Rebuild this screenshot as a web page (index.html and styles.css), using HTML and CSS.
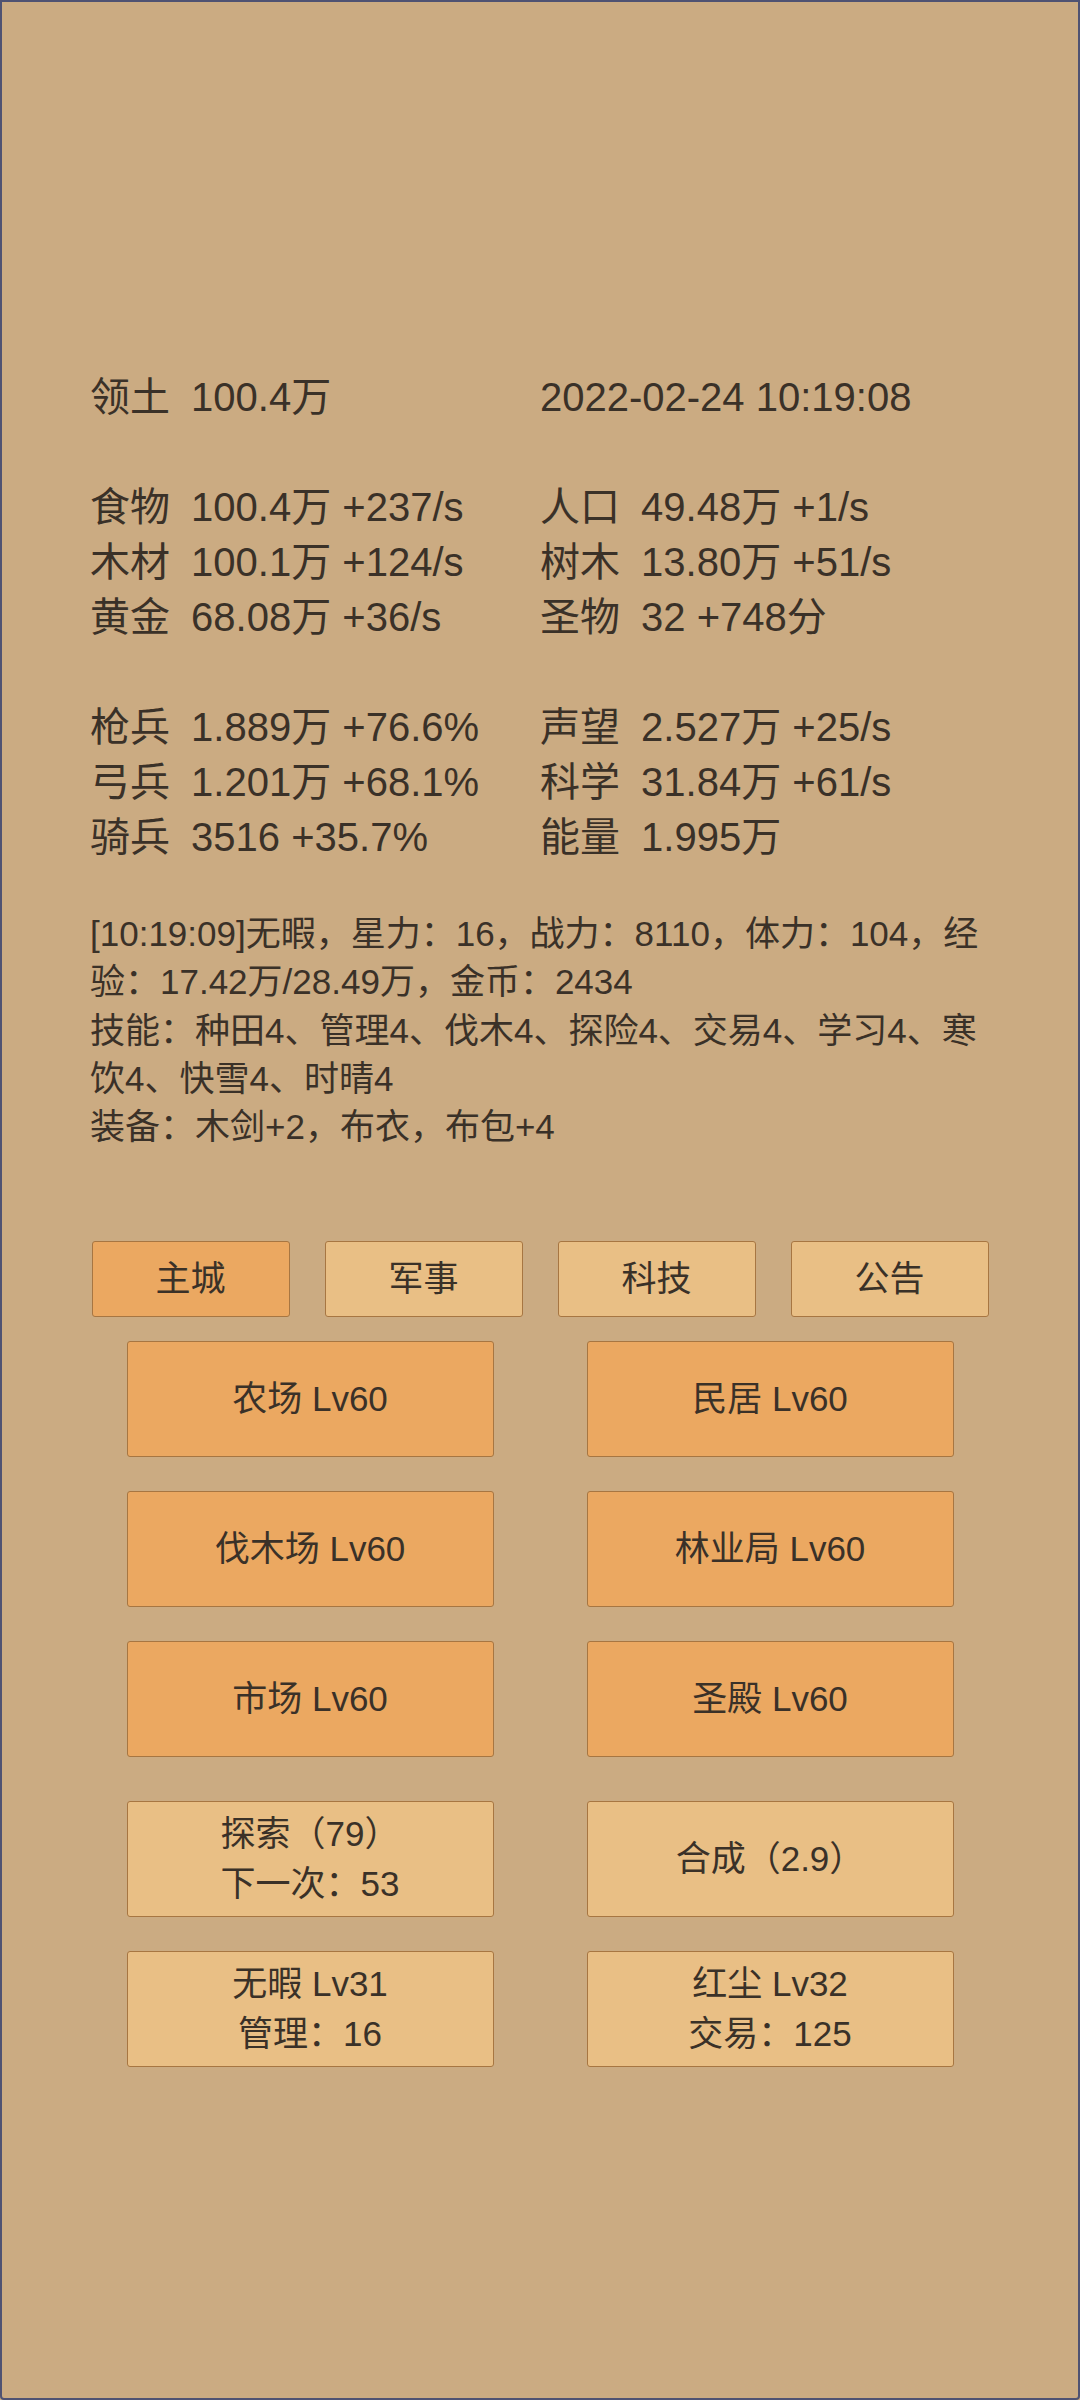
FILE: index.html
```html
<!DOCTYPE html>
<html lang="zh">
<head>
<meta charset="utf-8">
<link rel="stylesheet" href="styles.css">
</head>
<body>
<div class="page">
  <div class="content">
    <div class="stats">
      <div class="stat"><span class="lbl">领土</span> 100.4万</div>
      <div class="stat">2022-02-24 10:19:08</div>
    </div>
    <div class="stats group">
      <div class="stat"><span class="lbl">食物</span> 100.4万 +237/s</div>
      <div class="stat"><span class="lbl">人口</span> 49.48万 +1/s</div>
      <div class="stat"><span class="lbl">木材</span> 100.1万 +124/s</div>
      <div class="stat"><span class="lbl">树木</span> 13.80万 +51/s</div>
      <div class="stat"><span class="lbl">黄金</span> 68.08万 +36/s</div>
      <div class="stat"><span class="lbl">圣物</span> 32 +748分</div>
    </div>
    <div class="stats group">
      <div class="stat"><span class="lbl">枪兵</span> 1.889万 +76.6%</div>
      <div class="stat"><span class="lbl">声望</span> 2.527万 +25/s</div>
      <div class="stat"><span class="lbl">弓兵</span> 1.201万 +68.1%</div>
      <div class="stat"><span class="lbl">科学</span> 31.84万 +61/s</div>
      <div class="stat"><span class="lbl">骑兵</span> 3516 +35.7%</div>
      <div class="stat"><span class="lbl">能量</span> 1.995万</div>
    </div>
    <div class="log">
      <p>[10:19:09]无暇，星力：16，战力：8110，体力：104，经验：17.42万/28.49万，金币：2434</p>
      <p>技能：种田4、管理4、伐木4、探险4、交易4、学习4、寒饮4、快雪4、时晴4</p>
      <p>装备：木剑+2，布衣，布包+4</p>
    </div>
    <div class="tabs">
      <div class="btn tab active">主城</div>
      <div class="btn tab">军事</div>
      <div class="btn tab">科技</div>
      <div class="btn tab">公告</div>
    </div>
    <div class="grid buildings">
      <div class="btn big active">农场 Lv60</div>
      <div class="btn big active">民居 Lv60</div>
      <div class="btn big active">伐木场 Lv60</div>
      <div class="btn big active">林业局 Lv60</div>
      <div class="btn big active">市场 Lv60</div>
      <div class="btn big active">圣殿 Lv60</div>
    </div>
    <div class="grid actions">
      <div class="btn big"><span>探索（79）</span><span>下一次：53</span></div>
      <div class="btn big"><span>合成（2.9）</span></div>
      <div class="btn big"><span>无暇 Lv31</span><span>管理：16</span></div>
      <div class="btn big"><span>红尘 Lv32</span><span>交易：125</span></div>
    </div>
  </div>
</div>
</body>
</html>
```

FILE: styles.css
```css
* { box-sizing: border-box; }
html, body {
  margin: 0;
  padding: 0;
  background: #cbab82;
}
body {
  font-family: "Liberation Sans", "Noto Sans CJK SC", sans-serif;
  color: #3a3128;
}
.page {
  width: 1080px;
  height: 2400px;
  border: 2px solid #4f5272;
  border-radius: 0 0 4px 4px;
  background: #cbab82;
  overflow: hidden;
}
.content {
  padding: 368px 88px 0 88px;
}
.stats {
  display: grid;
  grid-template-columns: 450px 450px;
  font-size: 40px;
  line-height: 55px;
}
.stats.group {
  margin-top: 55px;
}
.stat {
  white-space: nowrap;
}
.lbl {
  margin-right: 10px;
}
.log {
  margin-top: 45px;
  font-size: 35px;
  line-height: 48.3px;
  width: 905px;
}
.log p {
  margin: 0;
}
.tabs {
  margin-top: 90px;
  display: grid;
  grid-template-columns: repeat(4, 198px);
  column-gap: 35px;
  justify-content: center;
  width: 900px;
}
.btn {
  background: #e9bf85;
  border: 1.5px solid #a77642;
  border-radius: 3px;
  display: flex;
  flex-direction: column;
  align-items: center;
  justify-content: center;
  font-size: 35px;
  line-height: 50px;
  color: #3a3128;
}
.btn.active {
  background: #eba861;
}
.tab {
  height: 76px;
}
.grid {
  display: grid;
  grid-template-columns: 367px 367px;
  column-gap: 93px;
  row-gap: 34px;
  justify-content: center;
  width: 900px;
}
.buildings {
  margin-top: 24px;
}
.actions {
  margin-top: 44px;
}
.big {
  height: 116px;
}
```
